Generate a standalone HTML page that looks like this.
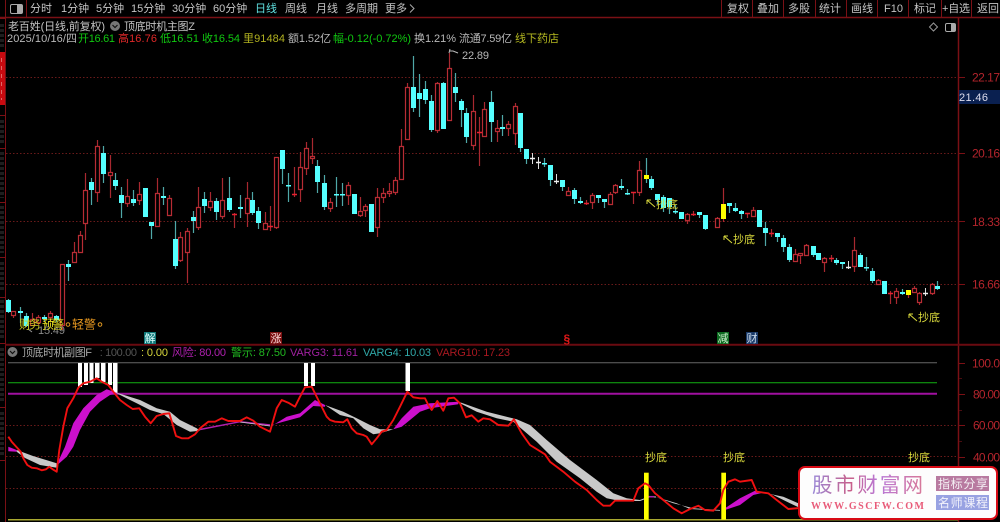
<!DOCTYPE html>
<html lang="zh"><head><meta charset="utf-8"><title>顶底时机</title>
<style>
html,body{margin:0;padding:0;background:#000;width:1000px;height:522px;overflow:hidden}
svg{display:block;position:absolute;left:0;top:0;filter:blur(.3px)}
text{font-family:"Liberation Sans","Noto Sans CJK SC",sans-serif;font-size:11px;white-space:pre}
.m{font-size:11px;fill:#c4c4c4}
.a{font-size:12px;fill:#b3242c}
.w{fill:#b8b8b8}
.y{font-size:11px;fill:#d8d83c}
</style></head><body>
<svg width="1000" height="522" viewBox="0 0 1000 522" xmlns="http://www.w3.org/2000/svg">
<defs><linearGradient id="lg" x1="0" y1="0" x2="1" y2="0"><stop offset="0" stop-color="#9a88d8"/><stop offset=".35" stop-color="#c8608a"/><stop offset=".6" stop-color="#b878d8"/><stop offset="1" stop-color="#d87898"/></linearGradient></defs>
<rect width="1000" height="522" fill="#000"/>

<!-- left strip -->
<rect x="0" y="52" width="5" height="53" fill="#c80a10"/>
<path d="M0 18.5H5M0 115.5H5M0 148.5H5M0 202.5H5M0 257.5H5M0 297.5H5M0 343.5H5M0 407.5H5M0 460.5H5" stroke="#7a1015"/>
<path d="M5.5 0V522" stroke="#7a1015"/>
<path d="M1 24V48M3 24V48M1 120V144M3 120V144M1 152V198M3 152V198M1 206V253M3 206V253M1 262V292M3 262V292M1 300V340M3 300V340M1 348V402M3 348V402M1 412V456M3 412V456" stroke="#3c3c3c" stroke-dasharray="3 2"/>
<path d="M1.500 58V100" stroke="#e06868" stroke-dasharray="4 4"/>

<!-- top bar -->
<path d="M0 17.5H1000" stroke="#7a1015" stroke-width="1.4"/>
<path d="M26.5 0V17M721.5 0V17M752.5 0V17M783.5 0V17M815.5 0V17M846.5 0V17M877.5 0V17M908.5 0V17M941.5 0V17M971.5 0V17" stroke="#7a1015"/>
<rect x="10.5" y="4.5" width="12" height="9" rx="1.5" fill="none" stroke="#aaa"/><rect x="17" y="5" width="5" height="8" fill="#aaa"/>
<text class="m" x="30" y="12">分时</text>
<text class="m" x="61" y="12">1分钟</text>
<text class="m" x="96" y="12">5分钟</text>
<text class="m" x="131" y="12">15分钟</text>
<text class="m" x="172" y="12">30分钟</text>
<text class="m" x="213" y="12">60分钟</text>
<text class="m" x="255" y="12" style="fill:#5fe0e0">日线</text>
<text class="m" x="285" y="12">周线</text>
<text class="m" x="316" y="12">月线</text>
<text class="m" x="345" y="12">多周期</text>
<text class="m" x="385" y="12">更多</text>
<path d="M410 4.5L414 8.5L410 12.5" fill="none" stroke="#aaa"/>
<text class="m" x="727" y="12">复权</text>
<text class="m" x="757" y="12">叠加</text>
<text class="m" x="788" y="12">多股</text>
<text class="m" x="819" y="12">统计</text>
<text class="m" x="851" y="12">画线</text>
<text class="m" x="884" y="12" textLength="19">F10</text>
<text class="m" x="914" y="12">标记</text>
<text class="m" x="942" y="12" textLength="28">+自选</text>
<text class="m" x="977" y="12">返回</text>

<!-- header rows -->
<text class="m" x="8" y="30" textLength="97">老百姓(日线,前复权)</text>
<circle cx="115" cy="26" r="5" fill="#777"/><path d="M112.5 25L115 27.5L117.5 25" fill="none" stroke="#111" stroke-width="1.2"/>
<text class="m" x="124" y="30" textLength="71">顶底时机主图Z</text>
<path d="M933.5 23L937.5 27L933.5 31L929.5 27Z" fill="none" stroke="#999"/>
<rect x="945.5" y="23.5" width="10" height="8" rx="1.5" fill="none" stroke="#aaa"/><rect x="951" y="24" width="4" height="7" fill="#aaa"/>

<text class="w" x="7" y="42" textLength="70">2025/10/16/四</text>
<text x="78" y="42" fill="#10c810" textLength="37">开16.61</text>
<text x="118" y="42" fill="#e02828" textLength="39">高16.76</text>
<text x="160" y="42" fill="#10c810" textLength="39">低16.51</text>
<text x="202" y="42" fill="#10c810" textLength="38">收16.54</text>
<text x="243" y="42" fill="#b0b020" textLength="42">里91484</text>
<text class="w" x="288" y="42" textLength="43">额1.52亿</text>
<text x="333" y="42" fill="#10c810" textLength="78">幅-0.12(-0.72%)</text>
<text class="w" x="414" y="42" textLength="42">换1.21%</text>
<text class="w" x="459" y="42" textLength="53">流通7.59亿</text>
<text x="515" y="42" fill="#b4b820" textLength="44">线下药店</text>

<!-- frame -->
<path d="M958.5 18V522" stroke="#7a1015" stroke-width="1.5"/>
<path d="M5 344.8H1000" stroke="#6a0a10" stroke-width="2"/>

<!-- dotted main -->
<path d="M6 77.5H958M6 153.5H958M6 221.5H958M6 284.5H958" stroke="#6a1a1a" stroke-dasharray="1.5 2"/>
<path d="M959 77.5H965M959 153.5H965M959 221.5H965M959 284.5H965M959 363.5H965M959 394.5H965M959 425.5H965M959 457.5H965" stroke="#7a1015"/>
<path d="M959 378.5H962M959 410.5H962M959 441.5H962" stroke="#4a0c10"/>
<text class="a" x="972" y="81.500" textLength="28">22.17</text>
<text class="a" x="972" y="157.500" textLength="28">20.16</text>
<text class="a" x="972" y="226" textLength="28">18.33</text>
<text class="a" x="972" y="288.500" textLength="28">16.66</text>
<text class="a" x="972" y="367.500" textLength="28">100.0</text>
<text class="a" x="973" y="398.500" textLength="27">80.00</text>
<text class="a" x="973" y="429.500" textLength="27">60.00</text>
<text class="a" x="973" y="461.500" textLength="27">40.00</text>
<rect x="959" y="90" width="41" height="14" fill="#0a2050"/>
<text x="959" y="101" fill="#dde" font-size="11" textLength="29">21.46</text>

<!-- candles: wicks -->
<path fill="none" stroke="#a82830" stroke-width="1.200" d="M13.5 311V318M32.5 313V325M38.500 315V325M50.500 311V322M62.500 264V330M74.500 242V262M80.500 231V252M85.500 173V240M97.500 140V202M110.500 155V198M127.500 179V207M139.500 182V205M157.500 178V226M169.500 195V215M180.500 232V262M187.500 228V283M198.500 187V230M210.500 192V211M222.500 178V219M247.500 182V227M265.500 212V230M276.500 157V229M300.500 152V202M306.500 142V175M312.500 138V164M330.500 198V212M348.500 182V205M360.500 197V217M365.500 204V217M377.500 188V237M383.500 188V203M389.500 183V197M395.500 177V195M401.500 129V180M407.500 83V139M437.500 82V133M449.500 53V120M473.500 95V150M484.500 102V137M497.500 120V142M508.500 121V136M515.500 103V145M568.500 187V195M592.500 193V209M610.500 192V204M615.500 184V194M639.500 161V196M687.500 213V224M717.500 217V228M753.500 207V217M795.500 249V262M800.500 253V264M806.500 244V256M824.500 257V272M854.500 237V272M878.500 279V285M896.500 288V304M914.500 286V293M919.500 292V305M932.500 283V295M234.500 213V228M270.500 206V231M294.500 167V197M479.500 117V166M586.500 200V205M633.500 192V204M693.500 211V216M747.500 213V218M771.500 229V237M831.500 255V262M890.500 291V304M723.500 188V222M908.500 295V298"/>
<path fill="none" stroke="#4fa8a8" stroke-width="1.200" d="M8.500 299V313M20.500 307V323M26.500 313V327M44.500 315V322M56.500 315V322M68.500 260V281M91.500 178V205M103.500 146V183M115.500 173V190M121.500 187V218M133.500 190V206M151.500 222V239M163.500 187V205M175.500 221V269M193.500 211V233M204.500 192V213M216.500 198V220M229.500 177V212M240.500 195V218M252.500 192V215M258.500 207V229M282.500 150V184M288.500 173V202M317.500 160V193M324.500 175V210M336.500 177V207M342.500 183V206M413.500 56V112M419.500 74V117M425.500 81V104M431.500 95V132M443.500 82V129M455.500 73V102M461.500 99V127M466.500 108V143M491.500 91V142M502.500 115V136M520.500 113V152M526.500 149V164M544.500 158V167M550.500 165V186M562.500 180V191M574.500 188V204M580.500 197V204M598.500 195V203M604.500 199V208M621.500 179V190M627.500 189V195M646.500 158V183M651.500 176V190M657.500 194V204M663.500 195V212M669.500 198V214M675.500 205V214M699.500 212V218M705.500 215V230M729.500 203V213M735.500 203V212M741.500 210V219M765.500 222V246M777.500 233V242M783.500 235V252M789.500 244V262M813.500 246V257M836.500 258V265M842.500 262V269M860.500 253V267M866.500 257V271M872.500 268V283M902.500 289V295M937.500 281V290"/>
<path fill="none" stroke="#ddd" d="M532.500 153V164M538.500 157V169M556.500 174V184M848.500 261V269M925.500 288V296"/>
<!-- white cross -->
<path fill="none" stroke="#eee" stroke-width="1.500" d="M530 158.500h5M536 162.500h5M554 181.500h5M846 267.500h5M923 293.500h5"/>
<!-- red bodies -->
<path fill="#000" stroke="#b82c34" stroke-width="1.200" d="M11.500 311.500h4v4h-4zM30.500 319.500h4v6h-4zM36.500 317.500h4v5h-4zM48.500 313.500h4v4h-4zM60.500 264.500h4v61h-4zM72.500 252.500h4v10h-4zM78.500 235.500h4v17h-4zM83.500 190.500h4v33h-4zM95.500 146.500h4v46h-4zM108.500 172.500h4v3h-4zM125.500 196.500h4v7h-4zM137.500 194.500h4v6h-4zM155.500 193.500h4v33h-4zM167.500 198.500h4v17h-4zM178.500 237.500h4v23h-4zM185.500 231.500h4v21h-4zM196.500 207.500h4v20h-4zM208.500 201.500h4v6h-4zM220.500 200.500h4v16h-4zM245.500 198.500h4v15h-4zM263.500 223.500h4v6h-4zM274.500 157.500h4v70h-4zM298.500 167.500h4v22h-4zM304.500 148.500h4v20h-4zM310.500 156.500h4v2h-4zM328.500 202.500h4v6h-4zM346.500 185.500h4v10h-4zM358.500 211.500h4v4h-4zM363.500 206.500h4v4h-4zM375.500 197.500h4v30h-4zM381.500 193.500h4v4h-4zM387.500 191.500h4v2h-4zM393.500 180.500h4v12h-4zM399.500 146.500h4v33h-4zM405.500 87.500h4v52h-4zM435.500 83.500h4v47h-4zM447.500 68.500h4v52h-4zM471.500 111.500h4v34h-4zM482.500 109.500h4v27h-4zM495.500 128.500h4v3h-4zM506.500 124.500h4v4h-4zM513.500 106.500h4v27h-4zM566.500 191.500h4v4h-4zM590.500 195.500h4v7h-4zM608.500 194.500h4v10h-4zM613.500 185.500h4v7h-4zM637.500 170.500h4v22h-4zM685.500 214.500h4v6h-4zM715.500 218.500h4v9h-4zM751.500 210.500h4v6h-4zM793.500 254.500h4v7h-4zM798.500 253.500h4v2h-4zM804.500 245.500h4v10h-4zM822.500 258.500h4v4h-4zM852.500 250.500h4v16h-4zM876.500 280.500h4v4h-4zM894.500 291.500h4v6h-4zM912.500 288.500h4v4h-4zM917.500 293.500h4v9h-4zM930.500 284.500h4v9h-4z"/>
<!-- red cross -->
<path fill="none" stroke="#e82030" stroke-width="1.500" d="M232 214.500h5M268 226.500h5M292 194.500h5M477 132.500h5M584 203.500h5M631 192.500h5M691 214.500h5M745 213.500h5M769 233.500h5M829 258.500h5M888 293.500h5"/>
<!-- cyan bodies -->
<path fill="none" stroke="#5ff" stroke-width="5" d="M8.500 300V312M20.500 311V313M26.500 316V326M44.500 317V319M56.500 316V320M68.500 264V267M91.500 182V190M103.500 153V174M115.500 180V186M121.500 195V203M133.500 199V203M145.500 188V217M151.500 222V226M163.500 196V198M175.500 239V266M193.500 217V221M204.500 199V206M216.500 201V212M229.500 198V210M240.500 207V209M252.500 200V213M258.500 211V223M282.500 150V169M288.500 185V186.500M317.500 166V182M324.500 183V207M336.500 194V195.500M342.500 194V195.500M354.500 194V214M371.500 204V232M413.500 87V108M419.500 93V99M425.500 89V100M431.500 101V130M443.500 83V129M455.500 87V93M461.500 101V110M466.500 113V137M491.500 102V122M502.500 127V129M520.500 113V148M526.500 149V159M544.500 163V164.500M550.500 165V180M562.500 180V187M574.500 190V199M580.500 201V203M598.500 195V198M604.500 199V202M621.500 186V188M627.500 193V194.500M651.500 179V188M657.500 194V200M663.500 197V208M669.500 198V207M675.500 211V212.500M681.500 212V219M699.500 212V215M705.500 215V229M729.500 203V206M735.500 208V211M741.500 211V214M759.500 210V227M765.500 228V233M777.500 233V237M783.500 238V247M789.500 247V260M813.500 246V255M818.500 253V260M836.500 260V263M842.500 262V264M860.500 255V267M866.500 267V268.500M872.500 271V281M884.500 281V294M902.500 292V294M937.500 286V289"/>
<!-- yellow bodies -->
<path fill="none" stroke="#ff0" stroke-width="5" d="M646.500 175V179M723.500 204V219M908.500 290V295"/>

<!-- main labels -->
<path d="M450 49L449 53M449 51H453L458 53" fill="none" stroke="#bbb"/>
<text x="462" y="59" font-size="11.500" fill="#b8b8b8" textLength="27">22.89</text>
<path d="M28 329L32 332" stroke="#999"/>
<text x="38" y="334" fill="#8a8a8a" font-size="11" textLength="27">15.49</text>
<text x="19" y="328.500" fill="#c8c820" style="font-size:12px" textLength="22">财务</text>
<text x="42" y="328.500" fill="#e8e020" style="font-size:12px" textLength="22">预警</text>
<circle cx="68" cy="324.500" r="1.800" fill="none" stroke="#e09820"/>
<text x="72" y="328.500" fill="#e89820" style="font-size:12px" textLength="24">轻 警</text>
<circle cx="100" cy="324.500" r="1.800" fill="none" stroke="#e09820"/>

<g class="y">
<path d="M655 207L647 200M647 200V204M647 200H651" fill="none" stroke="#d8d83c"/><text class="y" x="656" y="208" textLength="22">抄底</text>
<path d="M732 243L724 236M724 236V240M724 236H728" fill="none" stroke="#d8d83c"/><text class="y" x="733" y="243" textLength="22">抄底</text>
<path d="M917 321L909 314M909 314V318M909 314H913" fill="none" stroke="#d8d83c"/><text class="y" x="918" y="321" textLength="22">抄底</text>
</g>

<!-- markers -->
<rect x="144" y="332" width="12" height="12" fill="#107878"/><text x="144.500" y="342" fill="#dff" font-size="11">解</text>
<rect x="270" y="332" width="12" height="12" fill="#7a1010"/><text x="270.500" y="342" fill="#fdd" font-size="11">涨</text>
<text x="563.500" y="343" fill="#e01818" style="font-size:12px;font-weight:bold">§</text>
<rect x="717" y="332" width="12" height="12" fill="#0c6a20"/><text x="717.500" y="342" fill="#cec" font-size="11">减</text>
<rect x="746" y="332" width="12" height="12" fill="#1a3a68"/><text x="746.500" y="342" fill="#cde" font-size="11">财</text>

<!-- sub header -->
<circle cx="12.500" cy="352" r="5" fill="#777"/><path d="M10 351L12.500 353.500L15 351" fill="none" stroke="#111" stroke-width="1.200"/>
<text x="22" y="356" fill="#a8a8a8" font-size="11.500" textLength="70">顶底时机副图F</text>
<text x="97" y="356" fill="#555" textLength="40"> : 100.00</text>
<text x="141" y="356" fill="#d8d83c" textLength="27">: 0.00</text>
<text x="172" y="356" fill="#b020b0" textLength="54">风险: 80.00</text>
<text x="231" y="356" fill="#20b820" textLength="55">警示: 87.50</text>
<text x="290" y="356" fill="#a020a0" textLength="68">VARG3: 11.61</text>
<text x="363" y="356" fill="#30a8a8" textLength="68">VARG4: 10.03</text>
<text x="436" y="356" fill="#a81820" textLength="74">VARG10: 17.23</text>

<!-- sub lines -->
<path d="M8 362.700H937" stroke="#666"/>
<path d="M8 382.700H937" stroke="#12b012"/>
<path d="M8 393.700H937" stroke="#a010a0" stroke-width="2"/>
<path d="M6 425.500H958M6 456.500H958M6 488.500H958" stroke="#6a1a1a" stroke-dasharray="1.500 2"/>
<path d="M8 519.700H958" stroke="#a8a830" stroke-width="1.500"/>

<!-- white bars -->
<path fill="#fff" d="M78 363h4v24h-4zM84 363h4v22h-4zM89.500 363h4v20h-4zM95 363h4.500v15h-4.500zM101 363h4.500v19h-4.500zM108 363h4v22h-4zM113 363h4.500v30h-4.500zM304 363h4v23h-4zM311 363h4v23h-4zM405.500 363h4.500v28h-4.500z"/>

<!-- bands -->
<g fill="#cc10cc">
<path d="M8.300 446.700L16.700 450L16.700 451.700L8.300 451.300Z"/>
<path d="M57 464L65 446.700L73.300 423.300L83.300 408.300L96.700 395L106.700 389.300L116.700 392.700L116.700 393.300L110 395L100 401.700L90 411.700L80 430L73.300 446.700L66.700 456.700L57.300 465Z"/>
<path d="M271.700 426L286.700 416.700L300 413.300L315 400L325 405L325 406.700L313.300 406L300 417.300L283.300 421.700L271.700 425Z"/>
<path d="M393.300 429.300L401.700 418.300L413.300 406.700L430 403.300L458.300 401.700L458.300 404.300L430 408.300L420 411.700L410 420L401.700 426.700Z"/>
<path d="M725 508.300L740 498.300L755 490.700L761.700 492.700L761.700 493L753.300 495L740 505L725 510Z"/>
</g>
<g fill="#c8c8c8">
<path d="M16.700 450L33 456L56.700 463.300L56.700 467.700L40 465L25 458L16.700 451.700Z"/>
<path d="M116.700 392.700L140 400L156.700 408.300L170 411.700L180 420L196.700 428.300L200 430.700L190 431.700L176.700 425L163.300 414L150 410L136.700 403.300L116.700 393.300Z"/>
<path d="M325 405L343.300 411.700L356.700 418.300L370 425L380 429.300L393.300 429.300L380 433.300L373.300 434.300L363.300 428.300L353.300 418.300L340 415L330 408.300Z"/>
<path d="M460 402.300L486.700 411.700L516.700 419.300L530 425L546.700 440L570 460L596.700 480L613.300 493.300L626.700 498.300L640 500L640 501L620 501L606.700 498.300L596.700 491.700L580 478.300L556.700 461.700L536.700 441.700L513.300 421.700L496.700 418.300L476.700 411.700L460 403.300Z"/>
<path d="M655 496.700L673.300 503.300L693.300 508.300L720 510L720 510.700L690 509L676.700 503.300L660 498.300Z"/>
<path d="M766.700 493.300L783.300 496.700L798.300 503.300L798 507L790 503.300L773.300 495Z"/>
</g>
<path d="M200 429.500L240 421.700L270 425" fill="none" stroke="#b020b0" stroke-width="1.500"/>
<path d="M240 422L270 426" fill="none" stroke="#ccc" stroke-width=".8"/>
<path d="M640 500.500L650 496.700L656 497" fill="none" stroke="#ccc"/>
<path d="M646 496.700H654" stroke="#b020b0" stroke-width="1.500"/>

<!-- yellow signal bars -->
<rect x="644" y="472.700" width="4.700" height="47" fill="#ff0"/>
<rect x="721.300" y="472.700" width="4.700" height="47" fill="#ff0"/>

<!-- red curve -->
<path fill="none" stroke="#f01010" stroke-width="1.900" stroke-linejoin="round" d="M8.300 436.700L11.700 441.700L16.700 447.300L20.700 451.700L23.300 458.300L27.300 465L31.700 467.700L36.700 468.300L41.700 470.300L46 469.300L49.300 466.700L52.700 469.300L56.700 471.700L59.300 450L63.300 426.700L67.300 408.300L73.300 398.300L78.300 387.700L83.300 383.300L90 381.700L96.700 378.300L101.700 381.700L108.300 385L113.300 391.700L120 400L126.700 405L132.700 409L139.300 408.300L145 416.700L150.700 423.300L156.700 416L163.300 414L169.300 413.300L173.300 426.700L176 436L181.700 438.300L188.300 438.300L195 434.300L200 428.300L208.300 421.700L215 421.700L221.700 418.300L228.300 421L240 421L246.700 417.300L253.300 420.700L260 426.700L270 431.700L273.300 420L276.700 408.300L281.700 400L288.300 402.700L295 406.700L300 396.700L305 387.300L311.700 386.700L318.300 400L326.700 416.700L330 420L335 421.700L343.300 422.300L347.300 419.300L351.700 428.300L356.700 433.300L363.300 435L366.700 436.700L371.700 444.300L376.700 438.300L381.700 431.700L386.700 430L393.300 420L400 406.700L407.300 391.700L413.300 397.300L420 398.300L425 398.300L428.300 405L431.700 410L437.300 401L443.300 410.700L448.300 398.300L454 397.700L460 403.300L466 417.300L471.700 415.300L478.300 421.700L483.300 418.300L490 419.300L498.300 425L508.300 425.700L514 419.300L521.700 433.300L530 445L545 454.300L550 461.700L563.300 471.700L575 481.700L586.700 490L596.700 500L603.300 505.700L610 505.700L615 500.700L623.300 500.700L633.300 500.700L638.300 488.300L645 483.300L648.300 485L655 493.300L663.300 500L673.300 508.300L681.700 513.300L690 509L698.300 505.700L705 510L713.300 510.700L720 503.300L723.300 490L728.300 481.700L735 479.300L740 481.700L751.700 480L756.700 491.700L768.300 493.300L776.700 500L788.300 509L800 508"/>

<!-- sub 抄底 -->
<text class="y" x="645" y="461" textLength="22">抄底</text>
<text class="y" x="723" y="461" textLength="22">抄底</text>
<text class="y" x="908" y="461" textLength="22">抄底</text>

<!-- logo -->
<rect x="799" y="467" width="198" height="52" rx="6" fill="#fdfdfd" stroke="#d80a14" stroke-width="2"/>
<text x="812" y="492" fill="url(#lg)" style="font-size:20.500px;font-family:'WenQuanYi Zen Hei','Noto Sans CJK SC',sans-serif" textLength="111" lengthAdjust="spacing">股市财富网</text>
<text x="811" y="509" fill="#e85a78" style="font-family:'Liberation Serif',serif;font-size:10px;font-weight:bold" textLength="113">WWW.GSCFW.COM</text>
<rect x="936" y="476" width="53" height="15" fill="#b87aa0"/>
<rect x="936" y="495" width="53" height="15" fill="#98a2e2"/>
<text x="938" y="488" fill="#f4f0f4" style="font-size:12px" textLength="50">指标分享</text>
<text x="938" y="507" fill="#f4f4fc" style="font-size:12px" textLength="50">名师课程</text>
</svg>
</body></html>
